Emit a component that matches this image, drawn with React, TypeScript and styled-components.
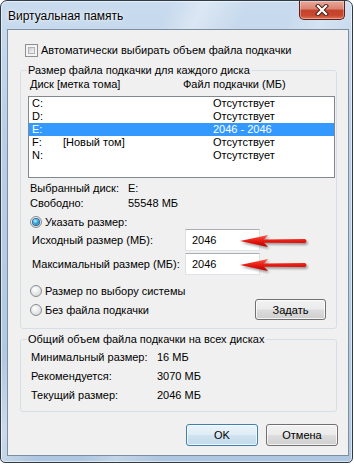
import styled, { createGlobalStyle } from 'styled-components';

const GlobalStyle = createGlobalStyle`
  html, body {
    margin: 0;
    padding: 0;
    background: #ffffff;
  }
  body {
    font-family: "Liberation Sans", Arial, sans-serif;
    font-size: 11px;
    color: #000;
    white-space: nowrap;
  }
  * { box-sizing: border-box; }
`;

const Window = styled.div`
  width: 353px;
  height: 463px;
  border: 1px solid #2f3a45;
  border-radius: 7px 7px 5px 5px;
  padding: 0 3px 6px 6px;
  display: flex;
  flex-direction: column;
  background:
    linear-gradient(115deg, transparent 30%, rgba(255,255,255,0.35) 36%, transparent 44%),
    linear-gradient(115deg, transparent 52%, rgba(255,255,255,0.25) 58%, transparent 66%),
    linear-gradient(180deg, #c9dbee 0%, #b9cfe7 30%, #aec6e0 100%);
  box-shadow: inset 0 0 0 1px rgba(255,255,255,0.55);
  overflow: hidden;
`;

const TitleBar = styled.div`
  height: 28px;
  display: flex;
  align-items: flex-start;
  justify-content: space-between;
`;

const Title = styled.span`
  padding: 7px 0 0 1px;
  line-height: 16px;
  font-size: 12px;
  color: #000;
  text-shadow: 0 0 6px rgba(255,255,255,0.9), 0 0 2px rgba(255,255,255,0.9);
`;

const CloseButton = styled.div`
  width: 46px;
  height: 19px;
  margin-right: 4px;
  border: 1px solid #5a2017;
  border-top: none;
  border-radius: 0 0 5px 5px;
  background: linear-gradient(180deg, #e9a99a 0%, #d9826e 45%, #c4432c 50%, #c9472e 80%, #e07255 100%);
  box-shadow: inset 0 0 0 1px rgba(255,255,255,0.35);
  display: flex;
  align-items: center;
  justify-content: center;
`;

const Client = styled.div`
  border: 1px solid #7d8e9f;
  background: #f0f0f0;
  padding: 14px 10px 9px 0;
  display: flex;
  flex-direction: column;
`;

const CheckRow = styled.label`
  display: flex;
  align-items: center;
  height: 13px;
  margin-left: 17px;
  gap: 3px;
  line-height: 13px;
`;

const CheckBox = styled.span`
  width: 13px;
  height: 13px;
  border: 1px solid #8e8f8f;
  background: #f4f4f4;
  padding: 2px;
  display: inline-flex;
  &::before {
    content: "";
    flex: 1;
    border: 1px solid #b1b3b6;
    background: linear-gradient(135deg, #c9ccd1 0%, #e6e7e9 60%, #f5f5f5 100%);
  }
`;

const Group = styled.fieldset<{ $top: number; $bottom: number }>`
  margin: ${p => p.$top}px 1px 0 12px;
  padding: 0 1px ${p => p.$bottom}px 7px;
  border: 1px solid #d5dfe5;
  border-radius: 3px;
  min-width: 0;
`;

const Legend = styled.legend`
  padding: 0 2px 0 1px;
  margin-left: -1px;
  line-height: 14px;
`;

const HeaderRow = styled.div`
  display: grid;
  grid-template-columns: 153px 1fr;
  padding-left: 2px;
  height: 14px;
  line-height: 14px;
`;

const ListBox = styled.div`
  margin-top: 5px;
  height: 82px;
  border: 1px solid #828790;
  background: #ffffff;
`;

const DriveRow = styled.div<{ $selected?: boolean }>`
  display: grid;
  grid-template-columns: 31px 150px 1fr;
  height: 13px;
  line-height: 13px;
  padding-left: 3px;
  background: ${p => (p.$selected ? '#3399ff' : 'transparent')};
  color: ${p => (p.$selected ? '#ffffff' : '#000000')};
`;

const InfoGrid = styled.div<{ $col: number; $row: number; $pad: number; $mt: number }>`
  display: grid;
  grid-template-columns: ${p => p.$col}px 1fr;
  grid-auto-rows: ${p => p.$row}px;
  align-items: center;
  padding-left: ${p => p.$pad}px;
  margin-top: ${p => p.$mt}px;
`;

const RadioRow = styled.label<{ $height: number; $mt?: number }>`
  display: flex;
  align-items: center;
  gap: 3px;
  height: ${p => p.$height}px;
  margin-top: ${p => p.$mt ?? 0}px;
  padding-left: 2px;
`;

const Radio = styled.span<{ $checked?: boolean }>`
  width: 12px;
  height: 12px;
  border-radius: 50%;
  border: 1px solid #8a8c8f;
  background: radial-gradient(circle at 40% 35%, #ffffff 0%, #e4e5e7 55%, #c9cbce 100%);
  display: inline-flex;
  align-items: center;
  justify-content: center;
  flex: none;
  &::after {
    content: "";
    width: 6px;
    height: 6px;
    border-radius: 50%;
    display: ${p => (p.$checked ? 'block' : 'none')};
    background: radial-gradient(circle at 40% 35%, #c8f0ff 0%, #3aa6df 45%, #0b5f9a 100%);
    box-shadow: 0 0 0 1px #2a6d9a;
  }
`;

const SizeRow = styled.div<{ $mt?: number }>`
  position: relative;
  display: flex;
  align-items: center;
  height: 22px;
  margin-top: ${p => p.$mt ?? 0}px;
`;

const SizeLabel = styled.span`
  width: 157px;
  padding-left: 4px;
`;

const SizeInput = styled.div`
  width: 75px;
  height: 22px;
  border: 1px solid #dfe3e8;
  border-top-color: #abadb3;
  background: #ffffff;
  padding-left: 6px;
  line-height: 20px;
`;

const ArrowMark = styled.svg`
  position: absolute;
  left: 211px;
  top: 3px;
  width: 70px;
  height: 18px;
  overflow: visible;
`;

const ButtonRow = styled.div`
  display: flex;
  align-items: center;
  justify-content: space-between;
  height: 21px;
  padding-right: 9px;
`;

const Button = styled.button<{ $width: number; $default?: boolean }>`
  width: ${p => p.$width}px;
  height: ${p => (p.$default !== undefined ? 22 : 21)}px;
  padding: 0;
  font-family: inherit;
  font-size: 11px;
  color: #000;
  border-radius: 3px;
  border: 1px solid ${p => (p.$default ? '#3c7fb1' : '#707070')};
  background: ${p =>
    p.$default
      ? 'linear-gradient(180deg, #eaf3f9 0%, #dfecf5 49%, #cfe2ef 51%, #c4dbec 100%)'
      : 'linear-gradient(180deg, #f2f2f2 0%, #ebebeb 49%, #dddddd 51%, #cfcfcf 100%)'};
  box-shadow: inset 0 0 0 1px rgba(255,255,255,0.75);
`;

const Footer = styled.div`
  display: flex;
  justify-content: flex-end;
  gap: 8px;
  margin-top: 12px;
`;

function Arrow() {
  return (
    <ArrowMark viewBox="0 0 70 18">
      <defs>
        <linearGradient id="redFill" x1="0" y1="0" x2="0" y2="1">
          <stop offset="0" stopColor="#ff5a4a" />
          <stop offset="0.5" stopColor="#e81a10" />
          <stop offset="1" stopColor="#b80000" />
        </linearGradient>
        <filter id="blur" x="-20%" y="-50%" width="140%" height="200%">
          <feGaussianBlur stdDeviation="1.2" />
        </filter>
      </defs>
      <path
        d="M1 9 L29 3 L25 7.4 L66 7 Q69 9 66 11 L25 10.8 L29 15 Z"
        fill="rgba(0,0,0,0.35)"
        transform="translate(1.5 2)"
        filter="url(#blur)"
      />
      <path d="M1 9 L29 3 L25 7.4 L66 7 Q69 9 66 11 L25 10.8 L29 15 Z" fill="url(#redFill)" />
    </ArrowMark>
  );
}

const drives = [
  { letter: 'C:', label: '', size: 'Отсутствует' },
  { letter: 'D:', label: '', size: 'Отсутствует' },
  { letter: 'E:', label: '', size: '2046 - 2046', selected: true },
  { letter: 'F:', label: '[Новый том]', size: 'Отсутствует' },
  { letter: 'N:', label: '', size: 'Отсутствует' },
];

export default function App() {
  return (
    <>
      <GlobalStyle />
      <Window>
        <TitleBar>
          <Title>Виртуальная память</Title>
          <CloseButton>
            <svg width="14" height="12" viewBox="0 0 14 12">
              <path d="M3 2 L11 10 M11 2 L3 10" stroke="#4a2218" strokeWidth="4.2" strokeLinecap="square" />
              <path d="M3 2 L11 10 M11 2 L3 10" stroke="#ffffff" strokeWidth="2.2" strokeLinecap="square" />
            </svg>
          </CloseButton>
        </TitleBar>
        <Client>
          <CheckRow>
            <CheckBox />
            <span>Автоматически выбирать объем файла подкачки</span>
          </CheckRow>

          <Group $top={6} $bottom={8}>
            <Legend>Размер файла подкачки для каждого диска</Legend>
            <HeaderRow>
              <span>Диск [метка тома]</span>
              <span>Файл подкачки (МБ)</span>
            </HeaderRow>
            <ListBox>
              {drives.map(d => (
                <DriveRow key={d.letter} $selected={d.selected}>
                  <span>{d.letter}</span>
                  <span>{d.label}</span>
                  <span>{d.size}</span>
                </DriveRow>
              ))}
            </ListBox>
            <InfoGrid $col={98} $row={15} $pad={2} $mt={2}>
              <span>Выбранный диск:</span>
              <span>E:</span>
              <span>Свободно:</span>
              <span>55548 МБ</span>
            </InfoGrid>
            <RadioRow $height={15} $mt={4}>
              <Radio $checked />
              <span>Указать размер:</span>
            </RadioRow>
            <SizeRow>
              <SizeLabel>Исходный размер (МБ):</SizeLabel>
              <SizeInput>2046</SizeInput>
              <Arrow />
            </SizeRow>
            <SizeRow $mt={2}>
              <SizeLabel>Максимальный размер (МБ):</SizeLabel>
              <SizeInput>2046</SizeInput>
              <Arrow />
            </SizeRow>
            <RadioRow $height={16} $mt={8}>
              <Radio />
              <span>Размер по выбору системы</span>
            </RadioRow>
            <ButtonRow>
              <RadioRow $height={21}>
                <Radio />
                <span>Без файла подкачки</span>
              </RadioRow>
              <Button $width={71}>Задать</Button>
            </ButtonRow>
          </Group>

          <Group $top={3} $bottom={7}>
            <Legend>Общий объем файла подкачки на всех дисках</Legend>
            <InfoGrid $col={126} $row={19} $pad={3} $mt={1}>
              <span>Минимальный размер:</span>
              <span>16 МБ</span>
              <span>Рекомендуется:</span>
              <span>3070 МБ</span>
              <span>Текущий размер:</span>
              <span>2046 МБ</span>
            </InfoGrid>
          </Group>

          <Footer>
            <Button $width={72} $default>OK</Button>
            <Button $width={72} $default={false}>Отмена</Button>
          </Footer>
        </Client>
      </Window>
    </>
  );
}
